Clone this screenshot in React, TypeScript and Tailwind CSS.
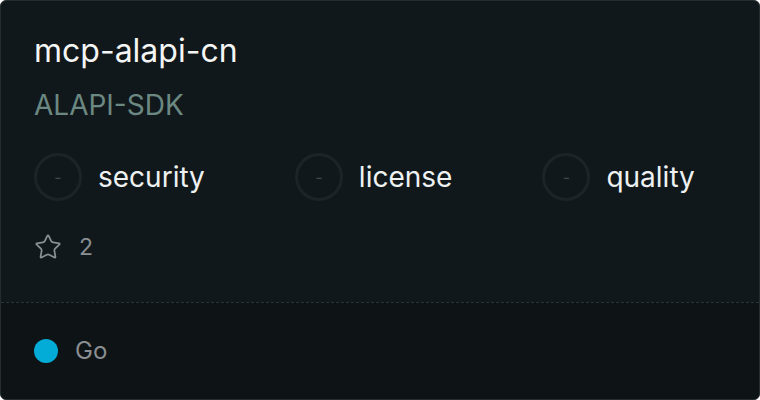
import { Star } from 'lucide-react';

const checks = ['security', 'license', 'quality'];

function ScoreBadge({ label }: { label: string }) {
  return (
    <div className="flex items-center gap-4">
      <div className="w-12 h-12 rounded-full border-[3px] border-[#1d2427] flex items-center justify-center text-[16px] leading-none text-[#3f474a]">
        -
      </div>
      <span className="text-[28px] leading-9 text-[#eef1f1]">{label}</span>
    </div>
  );
}

export default function App() {
  return (
    <div className="w-[760px] h-[400px] bg-white" style={{ fontFamily: 'Inter, "Noto Sans", sans-serif' }}>
      <div className="h-full w-full rounded-md border border-[#262d31] bg-[#11181b] overflow-hidden flex flex-col">
        <div className="px-[33px] pt-[30px] flex-1">
          <h1 className="text-[32px] leading-[40px] text-[#f4f5f5]">mcp-alapi-cn</h1>
          <div className="mt-[16px] text-[28px] leading-9 text-[#6b8882]">ALAPI-SDK</div>
          <div className="mt-[30px] flex items-center gap-[90px]">
            {checks.map((c) => (
              <ScoreBadge key={c} label={c} />
            ))}
          </div>
          <div className="mt-[32px] flex items-center gap-[17px] text-[#8a8f92]">
            <Star size={28} strokeWidth={1.5} />
            <span className="text-[23px] leading-7">2</span>
          </div>
        </div>
        <div className="h-[97px] border-t border-dashed border-[#2a3236] bg-[#0e1316] px-[33px] flex items-center gap-[17px]">
          <span className="w-6 h-6 rounded-full bg-[#02acd6]" />
          <span className="text-[24px] leading-7 text-[#8a8e91]">Go</span>
        </div>
      </div>
    </div>
  );
}
